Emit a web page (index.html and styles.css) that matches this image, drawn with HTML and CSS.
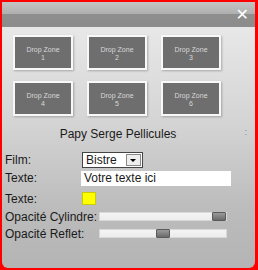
FILE: index.html
```html
<!DOCTYPE html>
<html lang="fr">
<head>
    <meta charset="UTF-8">
    <title>Papy Serge Pellicules</title>
    <link rel="stylesheet" href="styles.css">
</head>
<body>
    <div class="frame">
        <div class="header">
            <span class="close">&#x2715;</span>
        </div>
        <div class="panel">
            <div class="zones">
                <div class="zone">Drop Zone<br>1</div>
                <div class="zone">Drop Zone<br>2</div>
                <div class="zone">Drop Zone<br>3</div>
                <div class="zone">Drop Zone<br>4</div>
                <div class="zone">Drop Zone<br>5</div>
                <div class="zone">Drop Zone<br>6</div>
            </div>

            <div class="title">Papy Serge Pellicules<span class="grip">:</span></div>

            <div class="row row-film">
                <span class="label">Film:</span>
                <div class="select">
                    <span>Bistre</span>
                    <span class="arrow"></span>
                </div>
            </div>
            <div class="row">
                <span class="label">Texte:</span>
                <div class="text-input">Votre texte ici</div>
            </div>
            <div class="row row-color">
                <span class="label">Texte:</span>
                <div class="swatch"></div>
            </div>
            <div class="row row-slider">
                <span class="label">Opacité Cylindre:</span>
                <div class="track"><div class="thumb thumb-end"></div></div>
            </div>
            <div class="row row-slider">
                <span class="label">Opacité Reflet:</span>
                <div class="track"><div class="thumb thumb-mid"></div></div>
            </div>
        </div>
    </div>
</body>
</html>
```

FILE: styles.css
```css
* {
    margin: 0;
    padding: 0;
    box-sizing: border-box;
}

body {
    width: 258px;
    height: 270px;
    font-family: 'Liberation Sans', Arial, sans-serif;
    background: #ffffff;
}

.frame {
    width: 258px;
    height: 270px;
    border-style: solid;
    border-color: #ff0000;
    border-width: 2px 3px 2px 2px;
    display: flex;
    flex-direction: column;
    background: #ff0000;
}

/* Title bar */
.header {
    height: 25px;
    background: linear-gradient(to bottom, #c4c4c4 0%, #b0b0b0 46%, #8e8e8e 48%, #8c8c8c 100%);
    display: flex;
    justify-content: flex-end;
    align-items: center;
    padding-right: 6px;
}

.close {
    color: #ffffff;
    font-size: 16px;
    font-weight: bold;
    line-height: 1;
    font-family: 'DejaVu Sans', sans-serif;
}

/* Main panel */
.panel {
    flex: 1;
    background: linear-gradient(to bottom, #e8e8e8 0%, #d4d4d4 40%, #bcbcbc 75%, #b4b4b4 100%);
    border-radius: 0 0 6px 6px;
    padding: 8px 0 0 0;
}

.zones {
    display: grid;
    grid-template-columns: repeat(3, 60px);
    grid-auto-rows: 35px;
    column-gap: 14px;
    row-gap: 11px;
    padding-left: 11px;
}

.zone {
    background: #6e6e6e;
    border: 2px solid #f8f8f8;
    box-shadow: 1px 1px 2px rgba(0, 0, 0, 0.25);
    color: #d8d8d8;
    font-size: 7px;
    line-height: 8px;
    text-align: center;
    padding-top: 9px;
}

.title {
    position: relative;
    text-align: center;
    font-size: 12px;
    color: #1a1a1a;
    margin-top: 11px;
    height: 15px;
    line-height: 15px;
    padding-right: 21px;
}

.grip {
    position: absolute;
    right: 8px;
    top: -2px;
    font-size: 9px;
    color: #888888;
}

/* Form rows */
.row {
    display: flex;
    align-items: center;
    padding-left: 3px;
    height: 18px;
    font-size: 12px;
    color: #1a1a1a;
}

.row-film {
    margin-top: 9px;
}

.label {
    width: 76px;
    flex: none;
}

.select {
    width: 61px;
    height: 16px;
    margin-left: 1px;
    background: #ffffff;
    border: 1px solid #444444;
    display: flex;
    align-items: center;
    justify-content: space-between;
    padding: 0 1px 0 3px;
    font-size: 12px;
}

.arrow {
    width: 15px;
    height: 12px;
    border: 1px solid #888888;
    background: #eeeeee;
    position: relative;
}

.arrow::after {
    content: "";
    position: absolute;
    left: 3px;
    top: 4px;
    border-left: 3.5px solid transparent;
    border-right: 3.5px solid transparent;
    border-top: 3.5px solid #000000;
}

.text-input {
    width: 150px;
    height: 15px;
    background: #ffffff;
    font-size: 12px;
    line-height: 15px;
    padding-left: 3px;
}

.row-color {
    height: 19px;
    margin-top: 2px;
}

.swatch {
    width: 14px;
    height: 13px;
    margin-left: 1px;
    background: #ffff00;
    border: 1px solid #cccc00;
}

.row-slider {
    height: 17px;
}

.row-slider .label {
    width: 94px;
}

.track {
    position: relative;
    width: 128px;
    height: 9px;
    background: linear-gradient(to bottom, #f4f4f4, #ececec);
    border: 1px solid #d8d8d8;
}

.thumb {
    position: absolute;
    top: -1px;
    width: 14px;
    height: 9px;
    background: linear-gradient(to bottom, #9a9a9a, #6a6a6a);
    border: 1px solid #5a5a5a;
    border-radius: 1px;
}

.thumb-end {
    right: 0;
}

.thumb-mid {
    left: 56px;
}
```
